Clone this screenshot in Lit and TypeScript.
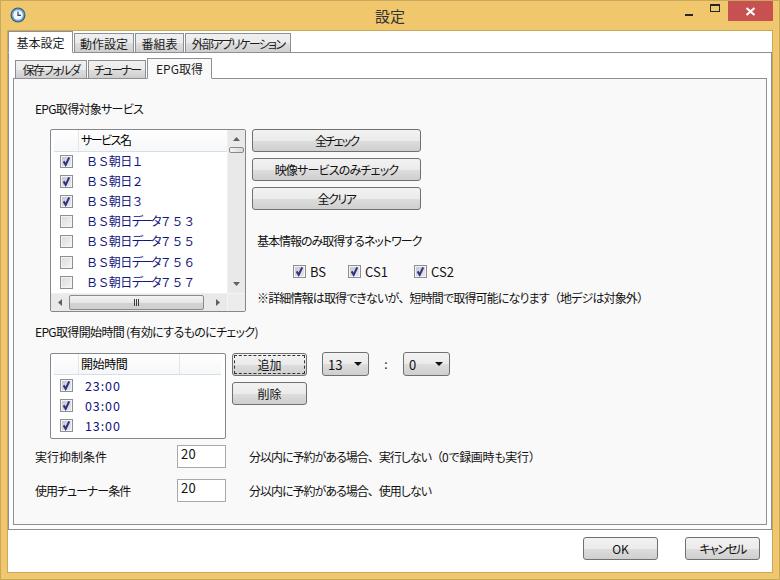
import { LitElement, html, css, svg } from "lit";
import { customElement } from "lit/decorators.js";

const services = [
  ["ＢＳ朝日１", "", "", true],
  ["ＢＳ朝日２", "", "", true],
  ["ＢＳ朝日３", "", "", true],
  ["ＢＳ朝日", "データ", "７５３", false],
  ["ＢＳ朝日", "データ", "７５５", false],
  ["ＢＳ朝日", "データ", "７５６", false],
  ["ＢＳ朝日", "データ", "７５７", false],
] as const;

const check = (on: boolean) => html`<span class="cb ${on ? "on" : ""}">
  ${on ? html`<svg width="11" height="11" viewBox="0 0 11 11"><path d="M2.6 5.4 L4.7 8.8 L8.2 1.4" fill="none" stroke="#32327e" stroke-width="2"/></svg>` : ""}
</span>`;

const tri = (points: string) => html`<svg width="9" height="7" viewBox="0 0 9 7"><polygon points=${points} fill="#606060"/></svg>`;

const clock = svg`<svg width="16" height="16" viewBox="0 0 16 16">
  <circle cx="8" cy="8" r="7.5" fill="#2c5c86"/>
  <circle cx="8" cy="8" r="6.4" fill="#6fa4d2"/>
  <circle cx="8" cy="8" r="4.8" fill="#f4f7fa"/>
  <path d="M8 4.5 V8.3 H11" fill="none" stroke="#27445f" stroke-width="1.2"/>
</svg>`;

@customElement("app-root")
export class AppRoot extends LitElement {
  static styles = css`
    :host { display: block; width: 780px; height: 580px; overflow: hidden;
      font-family: "Noto Sans CJK JP", "Noto Sans", sans-serif; font-size: 12px; color: #111;
      font-feature-settings: "palt"; }
    * { box-sizing: border-box; }
    .window { width: 780px; height: 580px; background: #f0c76c; border: 1px solid #c8a85a; display: flex; flex-direction: column; }
    .titlebar { height: 29px; flex: none; display: grid; grid-template-columns: 1fr auto 1fr; align-items: start; }
    .title-icon { padding: 6px 0 0 9px; display: flex; }
    .title { font-size: 15px; line-height: 29px; color: #333; }
    .controls { display: flex; justify-content: flex-end; margin-right: 6px; }
    .ctl { height: 20px; display: flex; align-items: center; justify-content: center; }
    .min { width: 26px; padding-top: 8px; }
    .min i { width: 8px; height: 2px; background: #262626; display: block; }
    .max { width: 26px; padding-bottom: 7px; }
    .max i { width: 10px; height: 8px; border: 1px solid #262626; border-top-width: 2px; display: block; }
    .close { width: 45px; background: #c75050; }
    .client { flex: 1; margin: 0 6px 6px; border: 1px solid #c8a85a; background: #fff; display: flex; flex-direction: column; }

    .tabs { display: flex; align-items: flex-end; position: relative; z-index: 1; flex: none; }
    .outer-tabs { height: 22px; margin-bottom: -1px; }
    .inner-tabs { height: 21px; padding-left: 2px; margin-bottom: -1px; }
    .tab { height: 20px; border: 1px solid #8e8f94; margin-right: 1px; display: flex; align-items: center; justify-content: center;
      background: linear-gradient(#f0f0f0, #ebebeb 50%, #dedede 52%, #cfcfcf); white-space: nowrap; color: #1c1c1c; }
    .tab.sel { background: #fff; border-bottom-color: #fff; height: 22px; }
    .inner-tabs .tab { height: 19px; }
    .inner-tabs .tab.sel { height: 21px; background: #f9f9f9; border-bottom-color: #f9f9f9; margin-right: 0; }
    .w65 { width: 65px; } .w60 { width: 60px; } .w49 { width: 49px; } .w106 { width: 106px; }
    .w72 { width: 72px; } .w58 { width: 58px; }
    .outer-panel { height: 478px; border: 1px solid #8e8f94; padding: 5px 4px 0; background: #fff; flex: none; }
    .inner-panel { height: 447px; width: 754px; border: 1px solid #8e8f94; background: #f9f9f9; padding: 21px 0 0 21px; }

    .label { height: 18px; line-height: 18px; white-space: nowrap; }
    .gap-list { margin-top: 11px; }
    .row { display: flex; margin-left: 15px; }

    .s04 { letter-spacing: -0.4px; } .s065 { letter-spacing: -0.65px; } .s07 { letter-spacing: -0.7px; }
    .s08 { letter-spacing: -0.8px; } .s1 { letter-spacing: -1px; } .s14 { letter-spacing: -1.4px; }
    .s15 { letter-spacing: -1.5px; } .s16 { letter-spacing: -1.6px; } .s17 { letter-spacing: -1.7px; }
    .s2 { letter-spacing: -2px; } .s0 { letter-spacing: -0.3px; }
    .fw { font-feature-settings: normal; }

    .list { border: 1px solid #828790; border-radius: 2px; background: #fff; flex: none; }
    .services { width: 196px; height: 183px; display: grid; grid-template-columns: 1fr 18px; grid-template-rows: 1fr 18px; margin-right: 6px; }
    .times { width: 176px; height: 86px; margin-right: 6px; padding-right: 4px; }
    .head { height: 21px; display: flex; border-bottom: 1px solid #d5dfe5; margin-left: 3px; background: linear-gradient(#fff, #f6f7f8); }
    .services .head { height: 21.5px; }
    .hcell { width: 25px; border-right: 1px solid #e3e6e9; flex: none; }
    .hname { padding-left: 2px; line-height: 20px; color: #000; width: 100px; flex: none; }
    .htail { border-left: 1px solid #e3e6e9; flex: 1; }
    .item { height: 20.1px; display: flex; align-items: center; color: #14147e; white-space: nowrap; }
    .item .cb { margin-left: 9px; }
    .item .name { margin-left: 13px; font-feature-settings: normal; letter-spacing: -0.6px; padding-bottom: 2px; }
    .name .kana { letter-spacing: -2.6px; }
    .name .digits { letter-spacing: -0.3px; }
    .item .time { margin-left: 12px; letter-spacing: 0.9px; font-size: 12.5px; }

    .cb { width: 13px; height: 13px; border: 1px solid #8e8f8f; display: flex; align-items: center; justify-content: center; flex: none;
      background: linear-gradient(135deg, #d8d9de, #f6f6f6); box-shadow: inset 0 0 0 1px #f4f4f4; }
    .cb.on { background: linear-gradient(135deg, #c4c5d2, #e9e9ee); }

    .sb { background: #e9e9e9; display: flex; align-items: center; justify-content: space-between; }
    .sb-v { flex-direction: column; padding: 6px 0 5px; position: relative; border-left: 1px solid #f0f0f0; }
    .sb-h { grid-column: 1; padding: 0 6px; border-top: 1px solid #f0f0f0; justify-content: flex-start; }
    .sb-h svg:last-child { margin-left: auto; }
    .corner { background: #ececec; border-left: 1px solid #f4f4f4; border-top: 1px solid #f4f4f4; }
    .vthumb { width: 15px; height: 6px; border: 1px solid #8a8a8a; border-radius: 2px; background: linear-gradient(90deg, #f4f4f4, #d8d8d8); position: absolute; top: 17px; left: 1px; }
    .hthumb { width: 135px; height: 15px; margin-left: 5px; border: 1px solid #8a8a8a; border-radius: 2px; background: linear-gradient(#f3f3f3, #e6e6e6 50%, #d2d2d2 52%, #cfcfcf); display: flex; align-items: center; justify-content: center; gap: 1px; }
    .hthumb i { width: 1px; height: 7px; background: #3d3d3d; display: block; }

    .col { width: 169px; display: flex; flex-direction: column; }
    .btn { height: 23px; flex: none; border: 1px solid #707070; border-radius: 3px; display: flex; align-items: center; justify-content: center; white-space: nowrap;
      background: linear-gradient(#f2f2f2, #ebebeb 50%, #dddddd 52%, #cfcfcf); color: #111; }
    .col .btn + .btn { margin-top: 6px; }
    .side { width: 400px; margin-left: 5px; }
    .net-label { margin-top: 22px; }
    .nets { display: flex; margin: 13px 0 0 36px; height: 16px; align-items: center; font-size: 13px; }
    .net { display: flex; align-items: center; gap: 4px; }
    .net:nth-child(1) { width: 55px; }
    .net:nth-child(2) { width: 66px; }
    .note { margin-top: 10px; letter-spacing: -0.85px; }
    .sec2 { margin-top: 11px; }
    .gap-list2 { margin-top: 12px; }
    .time-btns { width: 75px; display: flex; flex-direction: column; gap: 6px; margin-right: 15px; flex: none; }
    .default { position: relative; }
    .default::after { content: ""; position: absolute; inset: 1px; border: 1px dashed #333; border-radius: 1px; }
    .combo { width: 47px; height: 24px; margin-top: -1px; border: 1px solid #707070; border-radius: 3px; display: flex; align-items: center; justify-content: space-between; padding: 0 6px 0 5px;
      background: linear-gradient(#f2f2f2, #ebebeb 50%, #dddddd 52%, #cfcfcf); flex: none; font-size: 13px; }
    .combo i { width: 0; height: 0; border: 4px solid transparent; border-top: 4px solid #111; border-bottom: 0; display: block; }
    .colon { width: 34px; flex: none; text-align: center; line-height: 22px; }
    .form { display: flex; align-items: center; height: 23px; }
    .form-1 { margin-top: 6px; }
    .form-2 { margin-top: 11px; }
    .form .label.cap { width: 142px; flex: none; }
    .input { width: 49px; height: 23px; border: 1px solid #a9a9a9; background: #fff; padding-left: 3px; font-size: 13px; line-height: 16px; flex: none; margin-right: 23px; letter-spacing: 0.2px; }
    .footer { flex: 1; display: flex; justify-content: flex-end; gap: 27px; padding: 7px 12px 0 0; }
    .footer .btn { width: 75px; }
  `;

  render() {
    return html`
      <div class="window">
        <div class="titlebar">
          <div class="title-icon">${clock}</div>
          <div class="title">設定</div>
          <div class="controls">
            <div class="ctl min"><i></i></div>
            <div class="ctl max"><i></i></div>
            <div class="ctl close"><svg width="11" height="9" viewBox="0 0 11 9"><path d="M1.5 1 L9.5 8 M9.5 1 L1.5 8" stroke="#fff" stroke-width="2.2" fill="none"/></svg></div>
          </div>
        </div>
        <div class="client">
          <div class="tabs outer-tabs">
            <div class="tab sel w65">基本設定</div>
            <div class="tab w60">動作設定</div>
            <div class="tab w49">番組表</div>
            <div class="tab w106 s17">外部アプリケーション</div>
          </div>
          <div class="outer-panel">
            <div class="tabs inner-tabs">
              <div class="tab w72 s14">保存フォルダ</div>
              <div class="tab w58 s2">チューナー</div>
              <div class="tab sel w65">EPG取得</div>
            </div>
            <div class="inner-panel">
              <div class="label s07">EPG取得対象サービス</div>
              <div class="row gap-list">
                <div class="list services">
                  <div>
                    <div class="head"><div class="hcell"></div><div class="hname s15">サービス名</div></div>
                    ${services.map(([a, k, d, on]) => html`<div class="item">${check(on)}<span class="name">${a}<span class="kana">${k}</span><span class="digits">${d}</span></span></div>`)}
                  </div>
                  <div class="sb sb-v">
                    ${tri("4.5,1 8,5 1,5")}
                    <div class="vthumb"></div>
                    ${tri("1,1 8,1 4.5,5")}
                  </div>
                  <div class="sb sb-h">
                    <svg width="7" height="9" viewBox="0 0 7 9"><polygon points="1,4.5 5,1 5,8" fill="#606060"/></svg>
                    <div class="hthumb"><i></i><i></i><i></i></div>
                    <svg width="7" height="9" viewBox="0 0 7 9"><polygon points="6,4.5 2,1 2,8" fill="#606060"/></svg>
                  </div>
                  <div class="corner"></div>
                </div>
                <div class="col">
                  <div class="btn s2">全チェック</div>
                  <div class="btn s08">映像サービスのみチェック</div>
                  <div class="btn s15">全クリア</div>
                  <div class="side">
                    <div class="label net-label s1">基本情報のみ取得するネットワーク</div>
                    <div class="nets">
                      <div class="net">${check(true)}BS</div>
                      <div class="net">${check(true)}CS1</div>
                      <div class="net">${check(true)}CS2</div>
                    </div>
                    <div class="label note">※詳細情報は取得できないが<span class="fw">、</span>短時間で取得可能になります<span class="fw">（</span>地デジは対象外<span class="fw">）</span></div>
                  </div>
                </div>
              </div>
              <div class="label sec2 s065">EPG取得開始時間 (有効にするものにチェック)</div>
              <div class="row gap-list2">
                <div class="list times">
                  <div class="head"><div class="hcell"></div><div class="hname s04">開始時間</div><div class="htail"></div></div>
                  ${["23:00", "03:00", "13:00"].map((t) => html`<div class="item">${check(true)}<span class="time">${t}</span></div>`)}
                </div>
                <div class="time-btns">
                  <div class="btn default">追加</div>
                  <div class="btn">削除</div>
                </div>
                <div class="combo">13<i></i></div>
                <div class="colon">:</div>
                <div class="combo">0<i></i></div>
              </div>
              <div class="form form-1">
                <div class="label cap">実行抑制条件</div>
                <div class="input">20</div>
                <div class="label s1">分以内に予約がある場合<span class="fw">、</span>実行しない<span class="fw">（</span><span class="s0">0で録画時も実行</span><span class="fw">）</span></div>
              </div>
              <div class="form form-2">
                <div class="label cap s1">使用チューナー条件</div>
                <div class="input">20</div>
                <div class="label s1">分以内に予約がある場合<span class="fw">、</span>使用しない</div>
              </div>
            </div>
          </div>
          <div class="footer">
            <div class="btn">OK</div>
            <div class="btn s16">キャンセル</div>
          </div>
        </div>
      </div>
    `;
  }
}
